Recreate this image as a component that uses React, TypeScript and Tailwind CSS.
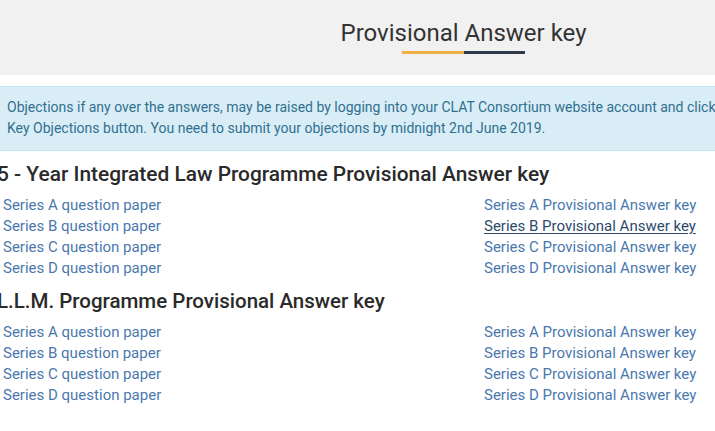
import React from "react";

const linkCls = "block text-[15px] leading-[21px] text-[#4a78ad] whitespace-nowrap";

function Section({ title, hover, top, size }: { title: string; hover?: boolean; top: string; size: string }) {
  const letters = ["A", "B", "C", "D"];
  return (
    <div>
      <h3
        className={`${top} ${size} mb-[10px] -ml-[3px] leading-[22px] font-medium text-[#2a2a2a] whitespace-nowrap`}
      >
        {title}
      </h3>
      <div className="grid grid-cols-[484px_auto]">
        <div className="pl-[3px]">
          {letters.map((l) => (
            <a key={l} href="#" className={linkCls}>
              Series {l} question paper
            </a>
          ))}
        </div>
        <div>
          {letters.map((l) => (
            <a
              key={l}
              href="#"
              className={
                hover && l === "B"
                  ? "block text-[15px] leading-[21px] text-[#2d4a6b] underline underline-offset-2 whitespace-nowrap"
                  : linkCls
              }
            >
              Series {l} Provisional Answer key
            </a>
          ))}
        </div>
      </div>
    </div>
  );
}

export default function App() {
  return (
    <div
      className="w-[715px] h-[431px] overflow-hidden bg-white"
      style={{ fontFamily: "Roboto, 'Noto Sans', Arial, sans-serif" }}
    >
      <div className="h-[75px] bg-[#f1f1f1] pl-[212px] flex flex-col items-center pt-[19px]">
        <h2 className="text-[24px] leading-[28px] text-[#333333] font-normal whitespace-nowrap">
          Provisional Answer key
        </h2>
        <div className="mt-[4px] flex h-[3px]">
          <div className="w-[62px] bg-[#f0b042]" />
          <div className="w-[61px] bg-[#2c3a4a]" />
        </div>
      </div>
      <div className="mt-[11px] w-[800px] bg-[#d9edf7] border-y border-[#bce8f1] pl-[7px] pt-[10px] pb-[11px] text-[14px] leading-[21px] text-[#31708f] whitespace-nowrap">
        Objections if any over the answers, may be raised by logging into your CLAT Consortium website account and click on Answer
        <br />
        Key Objections button. You need to submit your objections by midnight 2nd June 2019.
      </div>
      <Section top="mt-3" size="text-[20.9px]" title="5 - Year Integrated Law Programme Provisional Answer key" hover />
      <Section top="mt-[11px]" size="text-[20.5px]" title="L.L.M. Programme Provisional Answer key" />
    </div>
  );
}
